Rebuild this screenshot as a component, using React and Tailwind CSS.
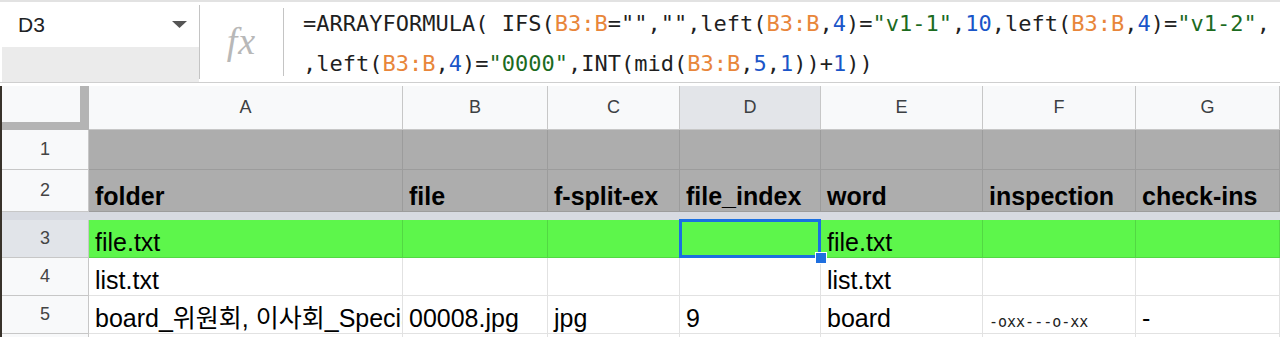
import React from "react";

const O = ({ children }) => <span className="text-[#e8863a]">{children}</span>;
const N = ({ children }) => <span className="text-[#1a55c8]">{children}</span>;
const S = ({ children }) => <span className="text-[#1c6b1f]">{children}</span>;

const cols = [
  { l: "A", w: "w-[314px]" },
  { l: "B", w: "w-[145px]" },
  { l: "C", w: "w-[132px]" },
  { l: "D", w: "w-[141px]", sel: true },
  { l: "E", w: "w-[162px]" },
  { l: "F", w: "w-[153px]" },
  { l: "G", w: "w-[144px]" },
];

const base =
  "relative shrink-0 flex items-end px-[6px] whitespace-nowrap text-[25px] leading-[25px] text-black";

function Row({ num, h, hdrBg, cellCls, cells, selected }) {
  return (
    <div className={`flex ${h} ${selected ? "relative z-10" : ""}`}>
      <div
        className={`w-[87px] shrink-0 flex items-center justify-center text-[18px] text-[#444] border-r border-b border-[#c7c7c7] ${hdrBg}`}
      >
        {num}
      </div>
      {cols.map((c, i) => {
        const isSel = selected && i === 3;
        return (
          <div
            key={i}
            className={`${base} ${c.w} ${cellCls} ${isSel ? "overflow-visible z-10" : "overflow-hidden"}`}
          >
            {cells[i]}
            {isSel && (
              <>
                <div className="absolute left-[-1px] top-[-1px] right-[-1px] bottom-[-1px] border-[3px] border-[#1a6fe0]" />
                <div className="absolute right-[-7px] bottom-[-7px] w-[12px] h-[12px] bg-[#1f6fdf] border border-white" />
              </>
            )}
          </div>
        );
      })}
    </div>
  );
}

export default function App() {
  return (
    <div className="w-[1280px] h-[337px] overflow-hidden bg-white font-['Liberation_Sans','Noto_Sans_CJK_KR',sans-serif]">
      {/* formula bar */}
      <div className="h-[86px] border-t-2 border-[#e2e2e2] flex flex-col">
        <div className="flex h-[81px] border-b border-[#cfcfcf]">
          <div className="w-[199px] shrink-0 flex flex-col pl-[2px]">
            <div className="h-[45px] bg-white flex items-center justify-between pl-[16px] pr-[12px]">
              <span className="text-[21px] text-[#202124]">D3</span>
              <svg width="15" height="7" viewBox="0 0 15 7">
                <path d="M0 0 L15 0 L7.5 7 Z" fill="#555" />
              </svg>
            </div>
            <div className="flex-1 bg-[#ebebeb]" />
          </div>
          <div className="w-[1px] shrink-0 bg-[#c4c4c4] my-[3px]" />
          <div className="w-[83px] shrink-0 flex items-center justify-center pb-[2px]">
            <span className="font-['Liberation_Serif',serif] italic text-[38px] leading-none text-[#b8b8b8] tracking-[1px]">
              fx
            </span>
          </div>
          <div className="w-[1px] shrink-0 bg-[#c4c4c4] my-[6px]" />
          <div className="flex-1 overflow-hidden pl-[19px] pt-[2px] font-['DejaVu_Sans_Mono',monospace] text-[22px] leading-[40px] text-[#1f1f1f] whitespace-nowrap">
            <div>
              =ARRAYFORMULA( IFS(<O>B3:B</O>="","",left(<O>B3:B</O>,<N>4</N>)=<S>"v1-1"</S>,<N>10</N>,left(<O>B3:B</O>,<N>4</N>)=<S>"v1-2"</S>,
            </div>
            <div>
              ,left(<O>B3:B</O>,<N>4</N>)=<S>"0000"</S>,INT(mid(<O>B3:B</O>,<N>5</N>,<N>1</N>))+<N>1</N>))
            </div>
          </div>
        </div>
      </div>

      {/* grid */}
      <div className="border-l-2 border-[#38322a]">
        {/* column header */}
        <div className="flex h-[44px]">
          <div className="w-[87px] shrink-0 bg-[#b4b4b4] relative">
            <div className="w-[78px] h-[36px] bg-[#f8f9fa]" />
          </div>
          {cols.map((c, i) => (
            <div
              key={i}
              className={`${c.w} shrink-0 flex items-center justify-center text-[18px] text-[#3c4043] border-r border-b border-[#c7c7c7] ${
                c.sel ? "bg-[#e3e5e9]" : "bg-[#f8f9fa]"
              }`}
            >
              {c.l}
            </div>
          ))}
        </div>

        <Row
          num="1"
          h="h-[40px]"
          hdrBg="bg-[#f8f9fa]"
          cellCls="bg-[#adadad] border-r border-b border-[#9c9c9c] pb-[2px]"
          cells={["", "", "", "", "", "", ""]}
        />
        <Row
          num="2"
          h="h-[42px]"
          hdrBg="bg-[#f8f9fa]"
          cellCls="bg-[#adadad] border-r border-b border-[#9c9c9c] pb-[2px] font-bold"
          cells={["folder", "file", "f-split-ex", "file_index", "word", "inspection", "check-ins"]}
        />
        <div className="h-[8px] bg-[#d7dae1]" />
        <Row
          num="3"
          h="h-[38px]"
          hdrBg="bg-[#e1e4e9]"
          cellCls="bg-[#5df64b] border-r border-b border-[#52d843] pb-[2px]"
          cells={["file.txt", "", "", "", "file.txt", "", ""]}
          selected
        />
        <Row
          num="4"
          h="h-[38px]"
          hdrBg="bg-[#f8f9fa]"
          cellCls="bg-white border-r border-b border-[#e2e2e2] pb-[2px]"
          cells={["list.txt", "", "", "", "list.txt", "", ""]}
        />
        <Row
          num="5"
          h="h-[38px]"
          hdrBg="bg-[#f8f9fa]"
          cellCls="bg-white border-r border-b border-[#e2e2e2] pb-[2px]"
          cells={[
            "board_위원회, 이사회_Special",
            "00008.jpg",
            "jpg",
            "9",
            "board",
            <span key="f" className="font-['DejaVu_Sans_Mono',monospace] text-[15px] leading-[15px] pb-[1px] text-[#222]">
              -oxx---o-xx
            </span>,
            "-",
          ]}
        />
        <Row
          num=""
          h="h-[38px]"
          hdrBg="bg-[#f8f9fa]"
          cellCls="bg-white border-r border-b border-[#e2e2e2]"
          cells={["", "", "", "", "", "", ""]}
        />
      </div>
    </div>
  );
}
